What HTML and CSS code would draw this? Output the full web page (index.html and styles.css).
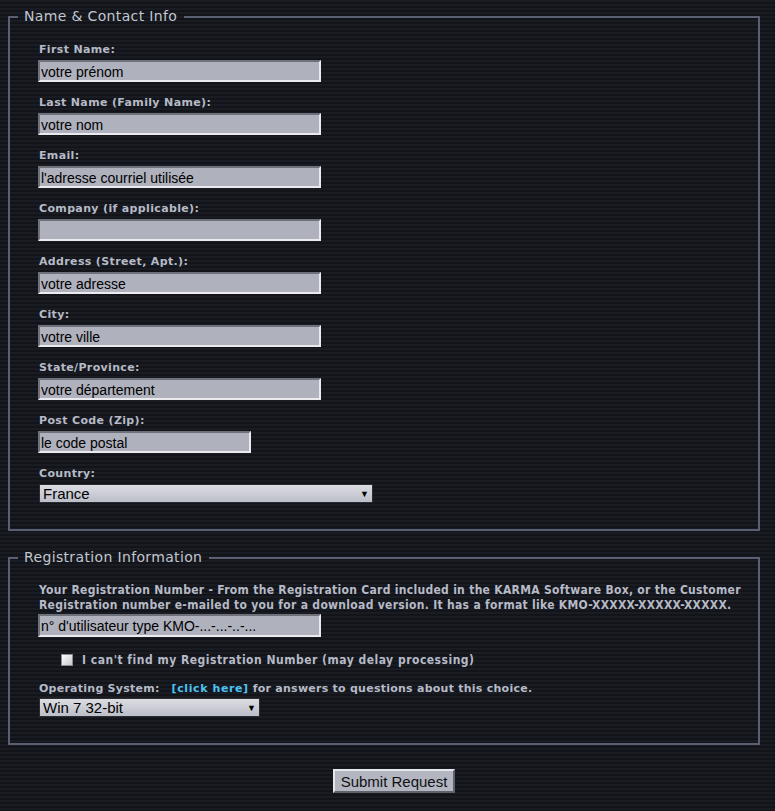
FILE: index.html
```html
<!DOCTYPE html>
<html>
<head>
<meta charset="utf-8">
<link rel="stylesheet" href="styles.css">
</head>
<body>
<form class="form">
  <fieldset class="box box-contact">
    <legend class="legend">Name &amp; Contact Info</legend>
    <div class="field"><label class="lbl">First Name:</label><input class="txt" type="text" value="votre prénom"></div>
    <div class="field"><label class="lbl">Last Name (Family Name):</label><input class="txt" type="text" value="votre nom"></div>
    <div class="field"><label class="lbl">Email:</label><input class="txt" type="text" value="l'adresse courriel utilisée"></div>
    <div class="field"><label class="lbl">Company (if applicable):</label><input class="txt" type="text" value=""></div>
    <div class="field"><label class="lbl">Address (Street, Apt.):</label><input class="txt" type="text" value="votre adresse"></div>
    <div class="field"><label class="lbl">City:</label><input class="txt" type="text" value="votre ville"></div>
    <div class="field"><label class="lbl">State/Province:</label><input class="txt" type="text" value="votre département"></div>
    <div class="field"><label class="lbl">Post Code (Zip):</label><input class="txt txt-short" type="text" value="le code postal"></div>
    <div class="field field-last"><label class="lbl">Country:</label>
      <div class="sel sel-country"><span class="sel-val">France</span><span class="sel-arrow">▼</span></div>
    </div>
  </fieldset>

  <fieldset class="box box-reg">
    <legend class="legend">Registration Information</legend>
    <p class="note">Your Registration Number - From the Registration Card included in the KARMA Software Box, or the Customer Registration number e-mailed to you for a download version. It has a format like KMO-XXXXX-XXXXX-XXXXX.</p>
    <input class="txt txt-reg" type="text" value="n° d'utilisateur type KMO-...-...-..-...">
    <div class="check-row"><span class="check"></span><span class="check-lbl">I can't find my Registration Number (may delay processing)</span></div>
    <div class="os-row"><span class="lbl">Operating System:</span><a class="link">[click here]</a><span class="lbl">for answers to questions about this choice.</span></div>
    <div class="sel sel-os"><span class="sel-val">Win 7 32-bit</span><span class="sel-arrow">▼</span></div>
  </fieldset>

  <div class="submit-row"><button class="btn" type="button">Submit Request</button></div>
</form>
</body>
</html>
```

FILE: styles.css
```css
html, body {
  margin: 0;
  padding: 0;
}
body {
  background-color: #14161c;
  background-image: repeating-linear-gradient(to bottom, #191c23 0px, #191c23 2px, #121419 2px, #121419 4px);
  min-height: 811px;
  padding: 8px 0 0 8px;
  box-sizing: border-box;
  font-family: "DejaVu Sans", Verdana, sans-serif;
}
.form {
  width: 752px;
}
.box {
  margin: 0;
  border: 2px solid #5a6071;
  padding: 17px 0 0 29px;
  min-width: 0;
}
.legend {
  color: #c2c6cf;
  font-size: 14px;
  line-height: 17px;
  letter-spacing: 0.35px;
  padding: 0 7px 0 6px;
  margin-left: -21px;
}
.box-contact {
  padding-bottom: 26px;
}
.box-reg {
  margin-top: 18px;
  padding-top: 17px;
  padding-bottom: 26px;
}
.field {
  display: flex;
  flex-direction: column;
  align-items: flex-start;
  margin-bottom: 13px;
}
.field-last {
  margin-bottom: 0;
}
.lbl {
  color: #b6bac6;
  font-size: 11px;
  font-weight: bold;
  line-height: 15px;
  margin-bottom: 3px;
  letter-spacing: 0.35px;
}
.txt {
  box-sizing: border-box;
  width: 283px;
  height: 22px;
  margin: 0 0 0 -1px;
  padding: 1px 1px 0 1px;
  background: #afb1bd;
  border-style: solid;
  border-width: 2px;
  border-color: #6f717a #ebebef #ebebef #6f717a;
  font-family: "Liberation Sans", Arial, sans-serif;
  font-size: 14px;
  color: #000;
  outline: none;
}
.txt-short {
  width: 213px;
}
.sel {
  box-sizing: border-box;
  height: 19px;
  display: flex;
  align-items: center;
  justify-content: space-between;
  background: linear-gradient(to bottom, #dcdde3, #bcbec8);
  border: 1px solid #2a2c33;
  font-family: "Liberation Sans", Arial, sans-serif;
  font-size: 15px;
  color: #000;
  padding: 0 3px 0 3px;
}
.sel-country {
  width: 334px;
}
.sel-os {
  width: 221px;
}
.sel-val {
  line-height: 17px;
}
.sel-arrow {
  font-size: 9px;
  color: #000;
  padding-right: 0;
}
.note {
  margin: 0;
  color: #b6bac6;
  font-family: "DejaVu Sans Condensed", "DejaVu Sans", sans-serif;
  font-weight: bold;
  font-size: 12px;
  line-height: 15px;
  letter-spacing: 0.3px;
  width: 725px;
}
.txt-reg {
  display: block;
  height: 23px;
  margin-top: 1px;
}
.check-row {
  display: flex;
  align-items: center;
  margin: 14px 0 0 22px;
  gap: 9px;
}
.check {
  width: 12px;
  height: 12px;
  background: linear-gradient(to bottom right, #ffffff, #c8c9cf);
  border: 1px solid #8a8b92;
  box-sizing: border-box;
}
.check-lbl {
  color: #b6bac6;
  font-family: "DejaVu Sans Condensed", "DejaVu Sans", sans-serif;
  font-weight: bold;
  font-size: 12px;
  line-height: 15px;
  letter-spacing: 0.5px;
  padding-top: 2px;
}
.os-row {
  display: flex;
  align-items: baseline;
  margin-top: 13px;
  margin-bottom: 2px;
}
.os-row .lbl {
  margin-bottom: 0;
  letter-spacing: 0.25px;
}
.link {
  color: #4cc3f2;
  font-size: 11px;
  font-weight: bold;
  line-height: 15px;
  margin: 0 4px 0 12px;
  letter-spacing: 0.6px;
  cursor: pointer;
}
.submit-row {
  display: flex;
  padding: 24px 0 0 325px;
}
.btn {
  box-sizing: border-box;
  width: 122px;
  height: 24px;
  background: #b3b5c1;
  border-style: solid;
  border-width: 2px;
  border-color: #e6e7ec #5f616b #5f616b #e6e7ec;
  font-family: "Liberation Sans", Arial, sans-serif;
  font-size: 15px;
  color: #111;
  padding: 0;
}
```
